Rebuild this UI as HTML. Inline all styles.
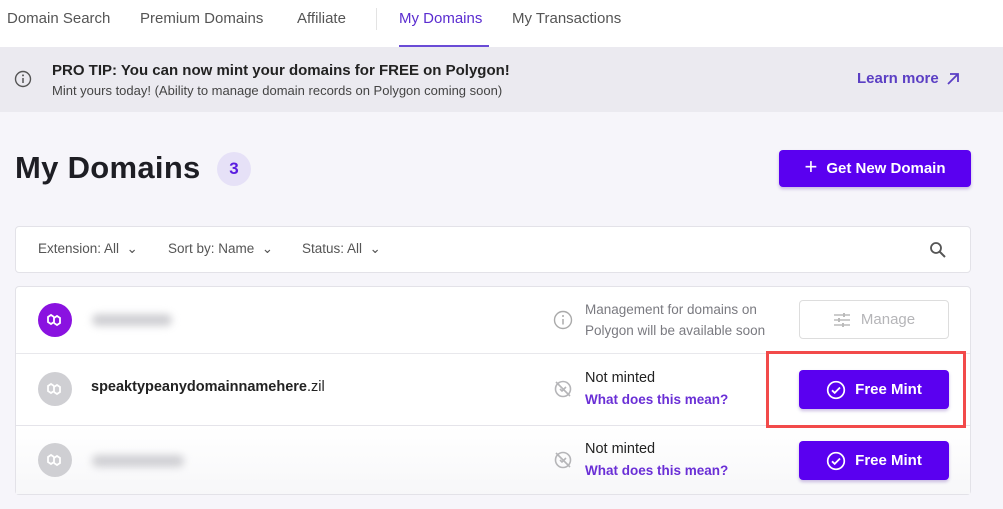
<!DOCTYPE html>
<html><head><meta charset="utf-8"><style>
*{margin:0;padding:0;box-sizing:border-box}
body{width:1003px;height:509px;overflow:hidden;background:#f6f5fa;font-family:"Liberation Sans","DejaVu Sans",sans-serif;position:relative;color:#1f1f24}
.a{position:absolute;white-space:nowrap}
.nav{left:0;top:0;width:1003px;height:47px;background:#fff;box-shadow:0 1px 3px rgba(0,0,0,.08)}
.nav span{position:absolute;top:10px;font-size:15px;color:#555}
.banner{left:0;top:47px;width:1003px;height:65px;background:#ebeaf0}
.btn{background:#5a00f0;color:#fff;border-radius:4px;font-weight:bold;font-size:15px;display:flex;align-items:center;justify-content:center;gap:9px;box-shadow:0 2px 3px rgba(60,0,150,.25)}
.card{background:#fff;border:1px solid #e3e2e8;border-radius:4px}
.row{left:16px;width:954px;border-top:1px solid #e5e4ea}
.av{width:34px;height:34px;border-radius:50%;background:#cfcfd3;display:flex;align-items:center;justify-content:center}
.blur{background:#cfcfd3;border-radius:8px;filter:blur(4px);height:12px}
.gray{font-size:13.5px;color:#7a7a80;line-height:21px}
.nm{font-size:14.5px;color:#222}
.lk{font-size:13.5px;color:#6a2fd6;font-weight:bold}
</style></head><body>
<div class="a nav">
<span style="left:7px">Domain Search</span>
<span style="left:140px">Premium Domains</span>
<span style="left:297px">Affiliate</span>
<div class="a" style="left:376px;top:8px;width:1px;height:22px;background:#e3e3e3"></div>
<span style="left:399px;color:#5b2dd0">My Domains</span>
<span style="left:512px">My Transactions</span>
<div class="a" style="left:399px;top:45px;width:90px;height:2px;background:#6a4bd6"></div>
</div>
<div class="a banner">
<svg class="a" style="left:14px;top:23px" width="18" height="18" viewBox="0 0 18 18"><circle cx="9" cy="9" r="7.5" fill="none" stroke="#555" stroke-width="1.4"/><line x1="9" y1="8" x2="9" y2="13" stroke="#555" stroke-width="1.5"/><circle cx="9" cy="5.4" r="1" fill="#555"/></svg>
<div class="a" style="left:52px;top:15px;font-size:15px;font-weight:bold;color:#222">PRO TIP: You can now mint your domains for FREE on Polygon!</div>
<div class="a" style="left:52px;top:36px;font-size:13px;color:#444">Mint yours today! (Ability to manage domain records on Polygon coming soon)</div>
<div class="a" style="left:857px;top:23px;font-size:15px;color:#5b3fc4;font-weight:bold">Learn more</div>
<svg class="a" style="left:945px;top:24px" width="16" height="16" viewBox="0 0 16 16"><path d="M3 13L13 3M5 3h8v8" fill="none" stroke="#5b3fc4" stroke-width="1.8"/></svg>
</div>
<div class="a" style="left:15px;top:150px;font-size:31px;font-weight:bold;color:#1e1e24;letter-spacing:.3px">My Domains</div>
<div class="a" style="left:217px;top:152px;width:34px;height:34px;border-radius:50%;background:#e6e1f7;color:#5a1de0;font-size:17px;font-weight:bold;text-align:center;line-height:34px">3</div>
<div class="a btn" style="left:779px;top:150px;width:192px;height:37px"><span style="font-size:22px;font-weight:normal;margin-top:-3px">+</span>Get New Domain</div>
<div class="a card" style="left:15px;top:226px;width:956px;height:47px">
<div class="a" style="left:22px;top:14px;font-size:13.5px;color:#555">Extension: All &nbsp;⌄</div>
<div class="a" style="left:152px;top:14px;font-size:13.5px;color:#555">Sort by: Name &nbsp;⌄</div>
<div class="a" style="left:286px;top:14px;font-size:13.5px;color:#555">Status: All &nbsp;⌄</div>
<svg class="a" style="left:913px;top:14px" width="18" height="18" viewBox="0 0 18 18"><circle cx="7" cy="7" r="5" fill="none" stroke="#555" stroke-width="1.8"/><line x1="10.5" y1="10.5" x2="16" y2="16" stroke="#555" stroke-width="2"/></svg>
</div>
<div class="a card" style="left:15px;top:286px;width:956px;height:209px"></div>
<!-- row1 -->
<div class="a av" style="left:38px;top:303px;background:#8a12e0"><svg width="18" height="14" viewBox="0 0 18 14"><path d="M8 4L5 2 2 4v5l3 2 3-2V5l3-2 3 2v5l-3 2-3-2" fill="none" stroke="#fff" stroke-width="1.8"/></svg></div>
<div class="a blur" style="left:92px;top:314px;width:80px"></div>
<svg class="a" style="left:553px;top:310px" width="20" height="20" viewBox="0 0 20 20"><circle cx="10" cy="10" r="8.5" fill="none" stroke="#aaa" stroke-width="1.4"/><line x1="10" y1="9" x2="10" y2="14.5" stroke="#aaa" stroke-width="1.5"/><circle cx="10" cy="6" r="1" fill="#aaa"/></svg>
<div class="a gray" style="left:585px;top:299px">Management for domains on<br>Polygon will be available soon</div>
<div class="a" style="left:799px;top:300px;width:150px;height:39px;border:1px solid #ddd;border-radius:4px;color:#b5b5b8;font-size:15px;display:flex;align-items:center;justify-content:center;gap:10px"><svg width="18" height="14" viewBox="0 0 18 14"><path d="M1 2h16M1 7h16M1 12h16" stroke="#bbb" stroke-width="1.5"/><path d="M11 0v4M6 5v4M10 10v4" stroke="#bbb" stroke-width="2"/></svg>Manage</div>
<!-- row2 -->
<div class="a row" style="top:353px;height:72px;border-top-color:#e8e8ec"></div>
<div class="a av" style="left:38px;top:372px"><svg width="18" height="14" viewBox="0 0 18 14"><path d="M8 4L5 2 2 4v5l3 2 3-2V5l3-2 3 2v5l-3 2-3-2" fill="none" stroke="#fff" stroke-width="1.8"/></svg></div>
<div class="a nm" style="left:91px;top:379px"><b>speaktypeanydomainnamehere</b>.zil</div>
<svg class="a" style="left:553px;top:379px" width="20" height="20" viewBox="0 0 20 20"><circle cx="10" cy="10" r="7.5" fill="none" stroke="#b5b5b8" stroke-width="1.6"/><path d="M7 10l2 2 4-4M3 3l14 14" fill="none" stroke="#b5b5b8" stroke-width="1.6"/></svg>
<div class="a" style="left:585px;top:370px;font-size:14.5px;color:#222">Not minted</div>
<div class="a lk" style="left:585px;top:392px">What does this mean?</div>
<div class="a btn" style="left:799px;top:370px;width:150px;height:39px"><svg width="20" height="20" viewBox="0 0 20 20"><circle cx="10" cy="10" r="8.3" fill="none" stroke="#fff" stroke-width="1.7"/><path d="M6 10.3l2.7 2.6L14 7.5" fill="none" stroke="#fff" stroke-width="1.8"/></svg>Free Mint</div>
<!-- row3 -->
<div class="a row" style="top:425px;height:69px;background:linear-gradient(#fff,#f7f7f9)"></div>
<div class="a av" style="left:38px;top:443px"><svg width="18" height="14" viewBox="0 0 18 14"><path d="M8 4L5 2 2 4v5l3 2 3-2V5l3-2 3 2v5l-3 2-3-2" fill="none" stroke="#fff" stroke-width="1.8"/></svg></div>
<div class="a blur" style="left:92px;top:455px;width:92px"></div>
<svg class="a" style="left:553px;top:450px" width="20" height="20" viewBox="0 0 20 20"><circle cx="10" cy="10" r="7.5" fill="none" stroke="#b5b5b8" stroke-width="1.6"/><path d="M7 10l2 2 4-4M3 3l14 14" fill="none" stroke="#b5b5b8" stroke-width="1.6"/></svg>
<div class="a" style="left:585px;top:441px;font-size:14.5px;color:#222">Not minted</div>
<div class="a lk" style="left:585px;top:463px">What does this mean?</div>
<div class="a btn" style="left:799px;top:441px;width:150px;height:39px"><svg width="20" height="20" viewBox="0 0 20 20"><circle cx="10" cy="10" r="8.3" fill="none" stroke="#fff" stroke-width="1.7"/><path d="M6 10.3l2.7 2.6L14 7.5" fill="none" stroke="#fff" stroke-width="1.8"/></svg>Free Mint</div>
<div class="a" style="left:766px;top:351px;width:200px;height:77px;border:3px solid #f24a4a;z-index:5"></div>
</body></html>
